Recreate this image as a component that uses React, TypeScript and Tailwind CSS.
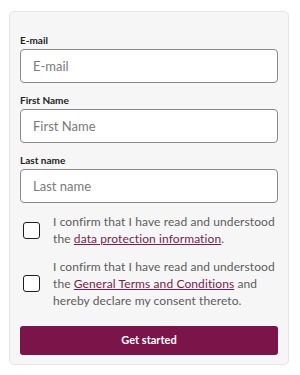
export default function App() {
  const font = { fontFamily: "Lato, 'Noto Sans', sans-serif" };
  const Field = ({ label, ph }: { label: string; ph: string }) => (
    <div className="flex flex-col">
      <label className="text-[10px] leading-[12px] font-bold text-[#222] mb-[3px]">{label}</label>
      <input
        placeholder={ph}
        className="h-[34px] w-full rounded-[4px] border border-[#8a8a8a] bg-white px-[12px] text-[13px] text-[#333] placeholder:text-[#7a7a7a] outline-none"
      />
    </div>
  );
  const Box = () => (
    <span className="shrink-0 ml-[3px] w-[17px] h-[17px] rounded-[3px] border-[1.5px] border-[#1e1e1e] bg-white" />
  );
  return (
    <div className="w-[300px] h-[375px] bg-white pt-[11px] pl-[9px]" style={font}>
      <div className="w-[280px] rounded-[5px] border border-[#e6e6e6] bg-[#f6f6f6] px-[10px] pt-[22px] pb-[9px]">
        <div className="flex flex-col gap-[11px]">
          <Field label="E-mail" ph="E-mail" />
          <Field label="First Name" ph="First Name" />
          <Field label="Last name" ph="Last name" />
        </div>
        <div className="mt-[10px] flex items-center gap-[13px]">
          <Box />
          <p className="text-[12px] leading-[17px] text-[#5c5c5c] tracking-[0.1px]">
            I confirm that I have read and understood the{" "}
            <a className="text-[#7b1c4f] underline">data protection information</a>.
          </p>
        </div>
        <div className="mt-[11px] flex items-center gap-[13px]">
          <Box />
          <p className="text-[12px] leading-[17px] text-[#5c5c5c] tracking-[0.1px]">
            I confirm that I have read and understood the{" "}
            <a className="text-[#7b1c4f] underline">General Terms and Conditions</a> and hereby declare my consent thereto.
          </p>
        </div>
        <button className="mt-[17px] h-[29px] w-full rounded-[3px] bg-[#7a1449] text-[11px] font-bold text-white">
          Get started
        </button>
      </div>
    </div>
  );
}
